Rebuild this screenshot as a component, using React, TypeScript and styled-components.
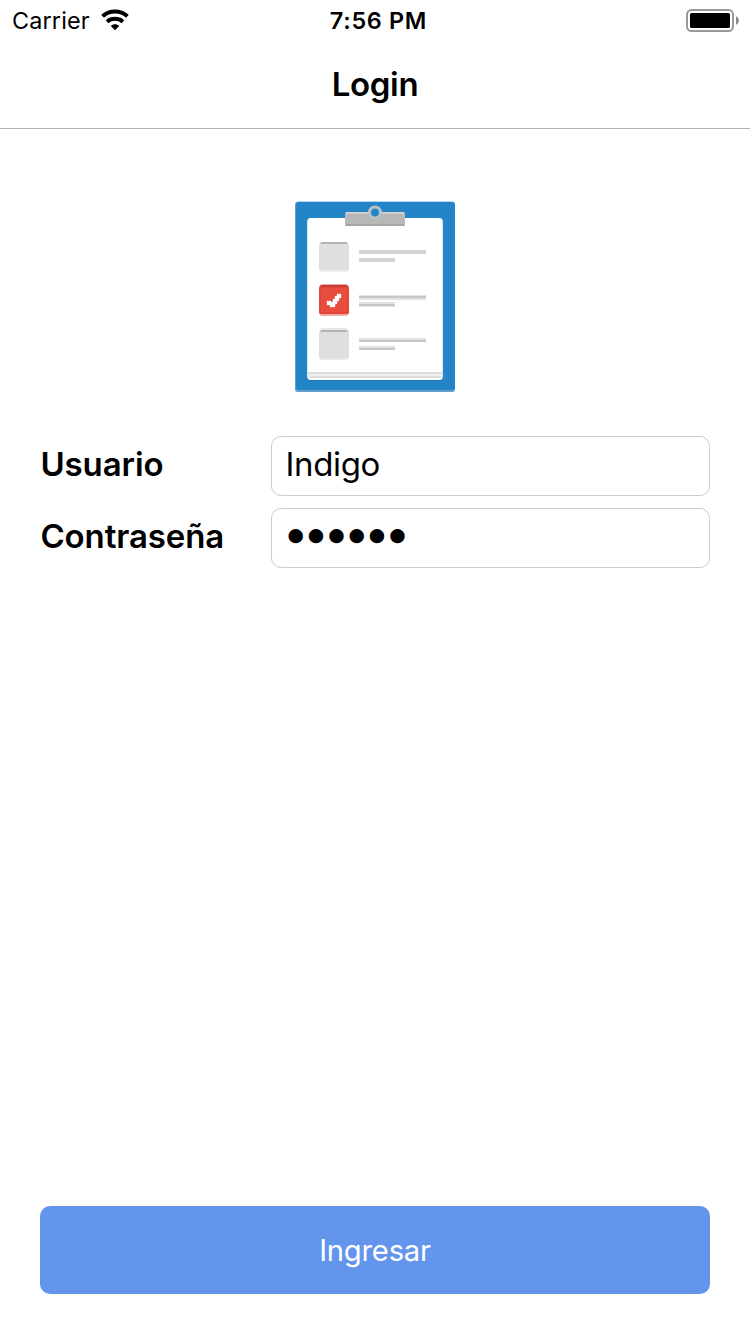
import React from "react";
import styled, { createGlobalStyle } from "styled-components";

const GlobalStyle = createGlobalStyle`
  * { box-sizing: border-box; }
  body {
    margin: 0;
    background: #fff;
    color: #000;
    font-family: Inter, "Liberation Sans", sans-serif;
  }
`;

const Screen = styled.div`
  display: flex;
  flex-direction: column;
  width: 750px;
  height: 1334px;
  background: #fff;
`;

const StatusBar = styled.div`
  display: grid;
  grid-template-columns: 1fr auto 1fr;
  align-items: center;
  height: 40px;
  padding: 0 11px 0 12px;
  font-size: 23.4px;
  line-height: 40px;
`;

const Network = styled.div`
  display: flex;
  align-items: center;
  gap: 11px;
  letter-spacing: 0.15px;
`;

const Carrier = styled.span`
  padding-top: 2px;
  line-height: 38px;
`;

const Clock = styled.div`
  font-size: 23.4px;
  font-weight: 570;
  letter-spacing: 0.7px;
  padding: 2px 0 0 6px;
  line-height: 38px;
`;

const Battery = styled.div`
  display: flex;
  justify-content: flex-end;
`;

const Header = styled.header`
  display: flex;
  justify-content: center;
  height: 89px;
  border-bottom: 1px solid #b2b2b2;
`;

const Title = styled.h1`
  margin: 0;
  font-size: 33px;
  font-weight: 600;
  line-height: 89px;
  letter-spacing: -0.3px;
`;

const Content = styled.main`
  display: flex;
  flex: 1;
  flex-direction: column;
  padding: 71px 40px 40px;
`;

const Logo = styled.svg`
  display: block;
  align-self: center;
`;

const Form = styled.form`
  display: flex;
  flex-direction: column;
  gap: 12px;
  margin-top: 44px;
`;

const Field = styled.label`
  display: grid;
  grid-template-columns: 231px 1fr;
  height: 60px;
`;

const FieldLabel = styled.span`
  padding-left: 0.4px;
  font-size: 33px;
  font-weight: 600;
  line-height: 57px;
  letter-spacing: -0.1px;
`;

const FieldBox = styled.span`
  border: 1px solid #ccc;
  border-radius: 10px;
  padding-left: 13.5px;
  font-size: 33px;
  line-height: 55px;
  letter-spacing: -0.35px;
`;

const Mask = styled.span`
  display: block;
  padding-left: 2px;
  font-family: "DejaVu Sans", sans-serif;
  font-size: 18.8px;
  line-height: 51px;
  letter-spacing: 3.95px;
`;

const SubmitButton = styled.button`
  height: 88px;
  margin-top: auto;
  padding: 1px 0 0;
  border: 0;
  border-radius: 10px;
  background: #6495ed;
  color: #fff;
  font-family: inherit;
  font-size: 29.2px;
  line-height: 87px;
  letter-spacing: -0.2px;
`;

const WifiIcon = () => (
  <svg width="28" height="22" viewBox="0 0 28 22">
    <path d="M1.6 7.2C8.7.9 19.3.9 26.4 7.2" fill="none" stroke="#000" strokeWidth="4.2" />
    <path d="M6.1 12.7C10.6 8.9 17.4 8.9 21.9 12.7" fill="none" stroke="#000" strokeWidth="4" />
    <path d="M9.8 17C12.2 14.6 15.8 14.6 18.2 17L14 21.2Z" />
  </svg>
);

const BatteryIcon = () => (
  <svg width="53" height="24" viewBox="0 0 53 24">
    <rect x="1" y="2" width="46" height="21" rx="4.5" fill="none" stroke="#999" strokeWidth="2" />
    <rect x="4" y="5" width="40" height="15" rx="1.5" />
    <path d="M50 8.2C53.8 9.5 53.8 15.5 50 16.8Z" fill="#888" />
  </svg>
);

const ClipboardLogo = () => (
  <Logo width="160" height="192" viewBox="0 0 160 192">
    <rect x="0" y="1" width="160" height="191" rx="4" fill="#b6d7ec" />
    <rect x="0" y="2" width="160" height="190" rx="3" fill="#629fca" />
    <rect x="1" y="2" width="159" height="188" rx="3" fill="#2385c7" />
    <rect x="14" y="179" width="132" height="2" fill="#1876b7" />
    <rect x="12" y="18" width="136" height="162" rx="4" fill="#d6e8f3" />
    <rect x="13" y="18" width="134" height="162" rx="3" fill="#fff" />
    <path d="M13 172h134v2H13zM14 176h132v2H14z" fill="#dcdcdc" />
    <path d="M13 174h134v2H13z" fill="#f0f0f0" />
    <rect x="50" y="12" width="60" height="14" rx="1.5" fill="#b8b8b8" />
    <path d="M51 12h58v2H51z" fill="#d0cfce" />
    <path d="M51 24h58v2H51z" fill="#a6a6a6" />
    <circle cx="80" cy="12.5" r="5.5" fill="#2385c7" stroke="#bcc1c4" strokeWidth="3.2" />

    <rect x="24" y="42" width="30" height="30" rx="4" fill="#ececec" />
    <rect x="25" y="42" width="28" height="28" rx="3" fill="#b3b3b3" />
    <rect x="24" y="44" width="30" height="26" rx="2" fill="#dfdfdf" />
    <rect x="24" y="128" width="30" height="32" rx="4" fill="#e8e8e8" />
    <rect x="25" y="130" width="28" height="28" rx="3" fill="#b3b3b3" />
    <rect x="24" y="132" width="30" height="26" rx="2" fill="#dfdfdf" />

    <rect x="24" y="84" width="30" height="32" rx="4" fill="#f1aaa2" />
    <rect x="24.5" y="85" width="29" height="29" rx="3" fill="#c43d31" />
    <rect x="24" y="87" width="30" height="27" rx="2" fill="#e2463a" />
    <rect x="26" y="88" width="26" height="24" fill="#e74c3c" />
    <path
      d="M42 94h4v4h-2v3h-2v3h-2v3h-5v-2h-3v-4h4v1h2v-3h2v-3h2z"
      fill="#fff"
      stroke="#fff"
      strokeOpacity="0.4"
      strokeWidth="0.8"
    />

    <path d="M64 50h67v4H64zM64 58h36v4H64z" fill="#d4d4d4" />
    <path d="M64 95h67v5H64zM64 102h36v5H64zM64 138h67v4H64zM64 146h36v4H64z" fill="#e2e2e2" />
    <path d="M64 96h67v2H64zM64 104h36v2H64zM64 140h67v2H64zM64 148h36v2H64z" fill="#c6c6c6" />
  </Logo>
);

export default function App() {
  return (
    <Screen>
      <GlobalStyle />
      <StatusBar>
        <Network>
          <Carrier>Carrier</Carrier>
          <WifiIcon />
        </Network>
        <Clock>7:56 PM</Clock>
        <Battery>
          <BatteryIcon />
        </Battery>
      </StatusBar>
      <Header>
        <Title>Login</Title>
      </Header>
      <Content>
        <ClipboardLogo />
        <Form>
          <Field>
            <FieldLabel>Usuario</FieldLabel>
            <FieldBox>Indigo</FieldBox>
          </Field>
          <Field>
            <FieldLabel>Contraseña</FieldLabel>
            <FieldBox>
              <Mask>●●●●●●</Mask>
            </FieldBox>
          </Field>
        </Form>
        <SubmitButton type="button">Ingresar</SubmitButton>
      </Content>
    </Screen>
  );
}
